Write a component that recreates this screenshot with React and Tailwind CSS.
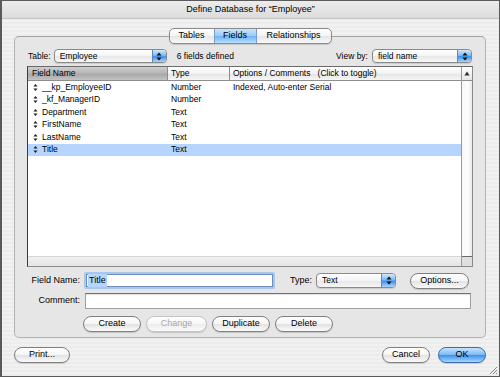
import React from "react";

const fields = [
  ["__kp_EmployeeID", "Number", "Indexed, Auto-enter Serial"],
  ["_kf_ManagerID", "Number", ""],
  ["Department", "Text", ""],
  ["FirstName", "Text", ""],
  ["LastName", "Text", ""],
  ["Title", "Text", ""],
];

const Stepper = () => (
  <div className="flex w-[14px] items-center justify-center rounded-r-[3px] border-l border-[#5d86c0] bg-[linear-gradient(#d2e8fd,#7cbaf6_45%,#3f8fea_55%,#a9d6fc)]">
    <svg width="6" height="9" viewBox="0 0 6 9">
      <path d="M3 0.5L5.6 3.6H0.4Z M3 8.5L5.6 5.4H0.4Z" fill="#111" />
    </svg>
  </div>
);

const Popup = ({ value, width, height = "h-[14px]" }) => (
  <div
    className={`flex ${width} ${height} items-stretch overflow-hidden rounded-[4px] border border-[#8a8a8a] bg-[linear-gradient(#ffffff,#f4f4f4_50%,#e7e7e7_51%,#f7f7f7)] shadow-[0_1px_1px_rgba(0,0,0,0.12)]`}
  >
    <span className="flex flex-1 items-center pl-[5px] text-[8.5px] text-black">{value}</span>
    <Stepper />
  </div>
);

const Pill = ({ children, width, disabled, primary }) => {
  let look =
    "border-[#808080] bg-[linear-gradient(#ffffff,#f5f5f5_50%,#e2e2e2_51%,#fafafa)] text-black";
  if (disabled) look = "border-[#c4c4c4] bg-[linear-gradient(#ffffff,#f6f6f6_50%,#ececec_51%,#fbfbfb)] text-[#a8a8a8]";
  if (primary)
    look = "border-[#3d6db0] bg-[linear-gradient(#c6e3fd,#7cbbf7_48%,#3f8fec_52%,#a7d8fd)] text-black";
  return (
    <div
      className={`flex ${width} h-[16px] items-center justify-center rounded-full border ${look} text-[9px] shadow-[0_1px_1px_rgba(0,0,0,0.15)]`}
    >
      {children}
    </div>
  );
};

const Grip = () => (
  <svg width="5" height="7" viewBox="0 0 5 7" className="shrink-0">
    <path d="M2.5 0L4.6 2.6H0.4Z M2.5 7L4.6 4.4H0.4Z" fill="#222" />
  </svg>
);

export default function App() {
  return (
    <div className="relative flex h-[377px] w-[500px] flex-col overflow-hidden border border-l-2 border-[#5a5a5a] bg-[repeating-linear-gradient(0deg,#ececec_0px,#ececec_2px,#f1f1f1_2px,#f1f1f1_4px)] font-['Liberation_Sans',Arial,sans-serif] text-black">
      {/* title bar */}
      <div className="flex h-[18px] shrink-0 items-center justify-center border-b border-[#c4c4c4] bg-[linear-gradient(#ececec,#dcdcdc)] text-[9px]">
        Define Database for “Employee”
      </div>

      <div className="flex flex-col px-[12px]">
        {/* tabs */}
        <div className="relative z-10 mt-[9px] flex w-[472px] justify-center">
          <div className="flex h-[16px] overflow-hidden rounded-[5px] border border-[#8a8a8a] bg-[linear-gradient(#ffffff,#f4f4f4_50%,#e6e6e6_51%,#f8f8f8)] text-[9px] shadow-[0_1px_1px_rgba(0,0,0,0.15)]">
            <div className="flex w-[44px] items-center justify-center">Tables</div>
            <div className="flex w-[43px] items-center justify-center border-x border-[#7a9ccc] bg-[linear-gradient(#cbe5fc,#98cbf8_48%,#6db3f4_52%,#b9dffd)]">
              Fields
            </div>
            <div className="flex w-[74px] items-center justify-center">Relationships</div>
          </div>
        </div>

        {/* group box */}
        <div className="-mt-[8px] flex h-[302px] w-[472px] flex-col rounded-[5px] border border-[#b2b2b2] border-t-[#a2a2a2] bg-[#e6e6e6] px-[12px] pt-[12px]">
          <div className="flex h-[14px] items-center text-[8.5px]">
            <span className="ml-[1px] mr-[3px]">Table:</span>
            <Popup value="Employee" width="w-[113px]" />
            <span className="ml-[10px]">6 fields defined</span>
            <span className="ml-auto mr-[4px]">View by:</span>
            <div className="mr-[1px]">
              <Popup value="field name" width="w-[100px]" />
            </div>
          </div>

          {/* field list */}
          <div className="mt-[3px] flex h-[201px] border border-[#8a8a8a] border-l-[#3c3c3c] border-t-[#6a6a6a] bg-white">
            <div className="flex flex-1 flex-col">
              <div className="flex h-[14px] shrink-0 border-b border-[#8e8e8e] text-[8.5px]">
                <div className="flex w-[140px] items-center border-r border-[#8e8e8e] bg-[linear-gradient(#cfcfcf,#b3b3b3_50%,#a4a4a4_51%,#c4c4c4)] pl-[4px]">
                  Field Name
                </div>
                <div className="flex w-[62px] items-center border-r border-[#8e8e8e] bg-[linear-gradient(#ffffff,#f3f3f3_50%,#e4e4e4_51%,#f6f6f6)] pl-[3px]">
                  Type
                </div>
                <div className="flex flex-1 items-center whitespace-pre bg-[linear-gradient(#ffffff,#f3f3f3_50%,#e4e4e4_51%,#f6f6f6)] pl-[3px]">
                  {"Options / Comments   (Click to toggle)"}
                </div>
              </div>
              {fields.map(([name, type, opts]) => (
                <div
                  key={name}
                  className={`flex h-[12.5px] shrink-0 items-center text-[8.5px] ${
                    name === "Title" ? "bg-[#b5d5ff]" : "bg-white"
                  }`}
                >
                  <div className="flex w-[140px] items-center gap-[4px] pl-[5px]">
                    <Grip />
                    <span>{name}</span>
                  </div>
                  <div className="w-[62px] pl-[3px]">{type}</div>
                  <div className="flex-1 pl-[3px]">{opts}</div>
                </div>
              ))}
              <div className="flex-1 bg-white" />
              <div className="h-[10px] shrink-0 border-t border-[#d6d6d6] bg-[linear-gradient(#f0f0f0,#e4e4e4)]" />
            </div>
            <div className="flex w-[11px] flex-col border-l border-[#9a9a9a]">
              <div className="flex h-[14px] items-center justify-center border-b border-[#8e8e8e] bg-[linear-gradient(#ffffff,#e6e6e6)]">
                <svg width="6" height="5" viewBox="0 0 6 5">
                  <path d="M3 0.5L5.6 4.5H0.4Z" fill="#333" />
                </svg>
              </div>
              <div className="flex-1 bg-[linear-gradient(90deg,#f7f7f7,#fdfdfd_60%,#e9e9e9)]" />
              <div className="h-[10px] border-t border-[#6a6a6a] bg-[#dedede]" />
            </div>
          </div>

          {/* field name row */}
          <div className="mt-[5px] flex h-[17px] items-center text-[9px]">
            <span className="w-[53px] text-right">Field Name:</span>
            <div className="ml-[4px] flex h-[17px] w-[191px] rounded-[2px] bg-[#a9c7ec] p-[2px]">
              <div className="flex flex-1 items-center border border-[#6d8dbd] bg-white pl-[1px]">
                <span className="bg-[#b5d5ff] px-[1px]">Title</span>
              </div>
            </div>
            <span className="ml-[15px] mr-[4px]">Type:</span>
            <Popup value="Text" width="w-[80px]" height="h-[15px]" />
            <div className="ml-[14px]">
              <Pill width="w-[59px]">Options...</Pill>
            </div>
          </div>

          {/* comment row */}
          <div className="mt-[4px] flex h-[16px] items-center text-[9px]">
            <span className="w-[53px] text-right">Comment:</span>
            <div className="ml-[5px] h-[16px] w-[386px] border border-[#a0a0a0] border-t-[#707070] bg-white shadow-[inset_0_1px_1px_rgba(0,0,0,0.12)]" />
          </div>

          {/* action buttons */}
          <div className="ml-[56px] mt-[7px] flex gap-[5px]">
            <Pill width="w-[58px]">Create</Pill>
            <Pill width="w-[61px]" disabled>
              Change
            </Pill>
            <Pill width="w-[58px]">Duplicate</Pill>
            <Pill width="w-[58px]">Delete</Pill>
          </div>
        </div>

        {/* dialog buttons */}
        <div className="mt-[9px] flex w-[472px] items-center">
          <Pill width="w-[56px]">Print...</Pill>
          <div className="ml-auto flex gap-[8px]">
            <Pill width="w-[48px]">Cancel</Pill>
            <Pill width="w-[48px]" primary>
              OK
            </Pill>
          </div>
        </div>
      </div>

      <svg width="9" height="9" viewBox="0 0 9 9" className="absolute bottom-[1px] right-[1px]">
        <path d="M8 1L1 8 M8 4L4 8 M8 7L7 8" stroke="#8a8a8a" strokeWidth="1" />
      </svg>
    </div>
  );
}
